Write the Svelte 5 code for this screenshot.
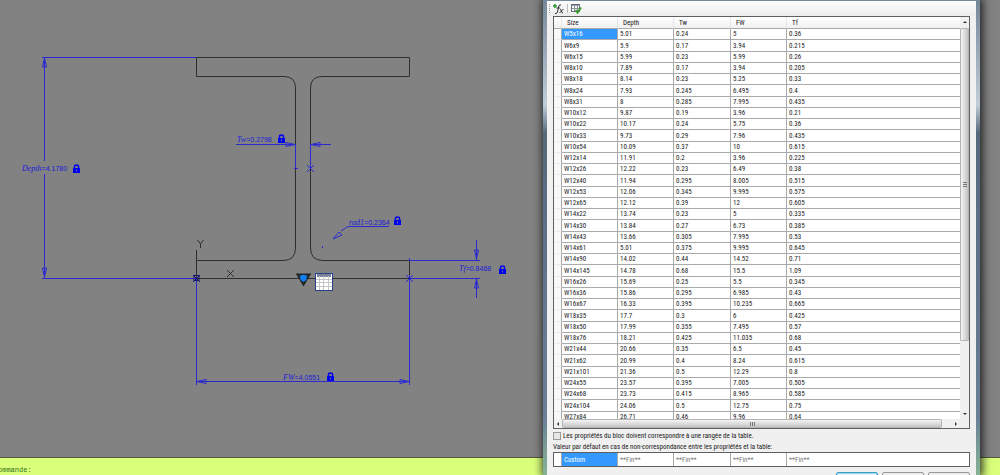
<script lang="ts">
	const columns = ['Size', 'Depth', 'Tw', 'FW', 'Tf'];

	const rows = [
		['W5x16', '5.01', '0.24', '5', '0.36'],
		['W6x9', '5.9', '0.17', '3.94', '0.215'],
		['W6x15', '5.99', '0.23', '5.99', '0.26'],
		['W8x10', '7.89', '0.17', '3.94', '0.205'],
		['W8x18', '8.14', '0.23', '5.25', '0.33'],
		['W8x24', '7.93', '0.245', '6.495', '0.4'],
		['W8x31', '8', '0.285', '7.995', '0.435'],
		['W10x12', '9.87', '0.19', '3.96', '0.21'],
		['W10x22', '10.17', '0.24', '5.75', '0.36'],
		['W10x33', '9.73', '0.29', '7.96', '0.435'],
		['W10x54', '10.09', '0.37', '10', '0.615'],
		['W12x14', '11.91', '0.2', '3.96', '0.225'],
		['W12x26', '12.22', '0.23', '6.49', '0.38'],
		['W12x40', '11.94', '0.295', '8.005', '0.515'],
		['W12x53', '12.06', '0.345', '9.995', '0.575'],
		['W12x65', '12.12', '0.39', '12', '0.605'],
		['W14x22', '13.74', '0.23', '5', '0.335'],
		['W14x30', '13.84', '0.27', '6.73', '0.385'],
		['W14x43', '13.66', '0.305', '7.995', '0.53'],
		['W14x61', '5.01', '0.375', '9.995', '0.645'],
		['W14x90', '14.02', '0.44', '14.52', '0.71'],
		['W14x145', '14.78', '0.68', '15.5', '1.09'],
		['W16x26', '15.69', '0.25', '5.5', '0.345'],
		['W16x36', '15.86', '0.295', '6.985', '0.43'],
		['W16x67', '16.33', '0.395', '10.235', '0.665'],
		['W18x35', '17.7', '0.3', '6', '0.425'],
		['W18x50', '17.99', '0.355', '7.495', '0.57'],
		['W18x76', '18.21', '0.425', '11.035', '0.68'],
		['W21x44', '20.66', '0.35', '6.5', '0.45'],
		['W21x62', '20.99', '0.4', '8.24', '0.615'],
		['W21x101', '21.36', '0.5', '12.29', '0.8'],
		['W24x55', '23.57', '0.395', '7.005', '0.505'],
		['W24x68', '23.73', '0.415', '8.965', '0.585'],
		['W24x104', '24.06', '0.5', '12.75', '0.75'],
		['W27x84', '26.71', '0.46', '9.96', '0.64'],
	];

	const fallback = ['Custom', '**Fin**', '**Fin**', '**Fin**', '**Fin**'];

	// parameter labels on the drawing
	const params = [
		{ name: 'Depth', value: '4.1780', x: 22, y: 171, lockX: 73, lockY: 164 },
		{ name: 'Tw', value: '0.2798', x: 237, y: 142, lockX: 278, lockY: 134 },
		{ name: 'rad1', value: '0.2364', x: 349, y: 225, lockX: 394, lockY: 216 },
		{ name: 'Tf', value: '0.8468', x: 459, y: 271, lockX: 499, lockY: 265 },
		{ name: 'FW', value: '4.0551', x: 283, y: 380, lockX: 327, lockY: 372 },
	];

	let selected = $state(0);
	let mustMatch = $state(false);
</script>

<div class="workspace">
	<main class="canvas">
		<svg class="drawing" width="540" height="400" aria-label="Section">
			<g class="section">
				<path d="M196.500 57.500H409.500V76.500H322Q310.500 76.500 310.500 88V248Q310.500 260.500 323 260.500H409.500V278.500H196.500V260.500H283Q295.500 260.500 295.500 248V88Q295.500 76.500 284 76.500H196.500Z" />
				<path d="M196.500 250V278" />
				<path d="M197.500 240l3 4 3-4M200.500 244v4M227 270l7 7M234 270l-7 7" />
			</g>

			<g class="dim">
				<path d="M42 57.500H196M44.500 58V161M44.500 174V278M42 278.500H196" />
				<path d="M42.500 67l2-9 2 9zM42.500 268l2 9 2-9z" />
				<path d="M236 144.500H296M310.500 144.500H331M295.500 144V168M310.500 144V168M294 168.500h4" />
				<path d="M286 142.500l9 2-9 2zM320 142.500l-9 2 9 2z" />
				<path d="M307 165l7 7M314 165l-7 7" />
				<path d="M389 226.500H348L341 231M333 239l6-7 3 3zM322.500 246v2" />
				<path d="M410 260.500H480M410 278.500H480M476.500 240V260M476.500 279V298" />
				<path d="M474.500 250l2 9 2-9zM474.500 288l2-9 2 9z" />
				<path d="M196.500 279V385M409.500 258V261M409.500 279V385M197 381.500H409" />
				<path d="M206 379.500l-9 2 9 2zM400 379.500l9 2-9 2z" />
				<path d="M406 275l7 7M413 275l-7 7M409.500 275v7" />
			</g>

			<g class="node">
				<rect x="194" y="275.500" width="5" height="5" />
				<path d="M193 275l7 7M200 275l-7 7" />
			</g>

			{#each params as p}
				<text class="param" x={p.x} y={p.y}><tspan class="name">{p.name}</tspan>={p.value}</text>
				<g class="lock" transform="translate({p.lockX} {p.lockY})">
					<path class="shackle" d="M1.500 4V2.500Q1.500 1 3.500 1T5.500 2.500V4" />
					<rect y="4" width="7" height="5" />
					<path class="keyhole" d="M3.500 5.500v2" />
				</g>
			{/each}

			<path class="grip" d="M297.500 274.500h12l-6 10z" />
			<circle class="grip-dot" cx="303.500" cy="278" r="3.200" />
			<g class="table-grip">
				<rect x="315.500" y="273.500" width="17" height="17" />
				<path class="head" d="M317 275.500h14" />
				<path d="M316 279.500h16M316 282.500h16M316 286.500h16M319.500 276v14M323.500 276v14M328.500 276v14" />
			</g>
		</svg>
	</main>

	<footer class="command">ommande:</footer>

	<section class="dialog">
		<div class="toolbar">
			<span class="gripper"></span>
			<button aria-label="Ajouter des propriétés">
				<svg width="11" height="12">
					<path class="plus" d="M0 3h4M2 1v4" />
					<path class="fx" d="M8 2Q6 1 5.500 4L4.500 9Q4 11 2 10.500M3.500 5H7M7 6Q8 6 8.300 8T10 10M10.500 6L6.500 10" />
				</svg>
			</button>
			<span class="divider"></span>
			<button aria-label="Vérifier la table">
				<svg width="11" height="12">
					<rect class="sheet" x="0.500" y="1.500" width="8" height="7" />
					<path class="sheet" d="M1 2.500h8M1 5.500h8M3.500 2v6M6.500 2v6" />
					<path class="tick" d="M4.500 7l2 2.500L10 4.500" />
				</svg>
			</button>
		</div>

		<div class="body">
			<div class="grid-box">
				<div class="viewport">
					<table>
						<colgroup><col class="mark" /><col /><col /><col class="wide" /><col /><col class="rest" /></colgroup>
						<thead>
							<tr>
								<td></td>
								{#each columns as name}<th scope="col">{name}</th>{/each}
							</tr>
						</thead>
						<tbody>
							{#each rows as row, i}
								<tr onclick={() => (selected = i)}>
									<td class="mark"></td>
									{#each row as cell, c}
										<td class:selected={selected === i && c === 0}>{cell}</td>
									{/each}
								</tr>
							{/each}
						</tbody>
					</table>
				</div>
				<div class="vscroll">
					<span class="arrow up"></span>
					<span class="thumb"><i></i></span>
					<span class="arrow down"></span>
				</div>
				<div class="hscroll">
					<span class="arrow left"></span>
					<span class="thumb"><i></i></span>
					<span class="arrow right"></span>
				</div>
			</div>

			<label class="match">
				<input type="checkbox" bind:checked={mustMatch} />
				Les propriétés du bloc doivent correspondre à une rangée de la table.
			</label>

			<p class="caption" id="fallback-caption">Valeur par défaut en cas de non-correspondance entre les propriétés et la table:</p>
			<table class="fallback" aria-labelledby="fallback-caption">
				<colgroup><col class="mark" /><col /><col /><col class="wide" /><col /><col class="rest" /></colgroup>
				<tbody>
					<tr>
						<td></td>
						{#each fallback as cell, c}
							<td class:selected={c === 0}>{cell}</td>
						{/each}
					</tr>
				</tbody>
			</table>

			<div class="actions">
				<button class="default">OK</button>
				<button>Annuler</button>
				<button>Aide</button>
			</div>
		</div>
	</section>
</div>

<style>
	:global(body) { margin: 0; }
	.workspace {
		position: relative; display: flex; flex-direction: column;
		height: 100vh; overflow: hidden; background: #828282;
		font-family: "Roboto Condensed", "Liberation Sans", Arial, sans-serif; font-size: 7px; color: #222;
	}
	.canvas { flex: 1; min-height: 0; overflow: hidden; }
	.drawing { display: block; fill: none; }
	.section { stroke: #2e2e2e; }
	.dim { stroke: #2a2ad0; }
	.node { stroke: #16166a; }
	.param { fill: #1c1cd8; font-family: "Liberation Sans", Arial, sans-serif; font-size: 7px; }
	.name { font-family: "Liberation Serif", serif; font-style: italic; font-size: 8px; }
	.lock rect { fill: #0000f0; }
	.shackle { stroke: #0000f0; stroke-width: 1.5; }
	.keyhole { stroke: #6666a0; }
	.grip { fill: #1d6fd0; stroke: #222; stroke-width: 2; }
	.grip-dot { fill: #1080f0; }
	.table-grip rect { fill: #fff; stroke: #27408a; }
	.table-grip path { stroke: #c4c4c4; }
	.table-grip .head { stroke: #7c8698; stroke-width: 3; }

	.command {
		height: 13px; padding-top: 4px; border-top: 1px solid #55583f;
		background: #d9ff7b; color: #35701c; text-indent: -2px;
		font: 7px/16px "Liberation Mono", monospace;
	}

	.dialog {
		position: absolute; top: 0; left: 54.300%; right: 2%; bottom: 0; overflow: hidden;
		border: solid #66788c; border-width: 1px 4px 0; background: #f0f0f0;
		border-image: linear-gradient(#75879a, #c0cdd8 22%, #55697d 28%, #6a8098 88%, #86b494) 1;
	}
	.workspace::after {
		content: ""; position: absolute; top: 0; bottom: 0; left: 54.300%; right: 2%;
		pointer-events: none; box-shadow: 1px 0 8px 2px #111c;
	}

	.toolbar {
		display: flex; align-items: center; gap: 3px; height: 15px; padding: 0 2px;
		background: linear-gradient(#fdfdfd, #ececec);
	}
	.gripper { width: 0; height: 9px; border-left: 1px dotted #999; }
	.divider { width: 1px; height: 9px; background: #bbb; }
	.toolbar button { display: flex; padding: 0; border: 0; background: none; }
	.toolbar svg { fill: none; stroke: #333; }
	.toolbar .plus { stroke: #2b9b35; stroke-width: 1.5; }
	.toolbar .sheet { fill: #fff; stroke: #66717d; }
	.toolbar .tick { fill: none; stroke: #3a9b2a; stroke-width: 2; }
	.toolbar path.sheet { fill: none; stroke: #8d969e; }

	.body { padding: 0 6px; }
	.grid-box {
		display: grid; grid-template: 402px 9px / 1fr 9px;
		border: 1px solid #5f5f5f; background: #f0f0f0;
	}
	.viewport { overflow: hidden; background: #fff; }

	table { width: 100%; table-layout: fixed; border-collapse: separate; border-spacing: 0; }
	col { width: 56px; }
	col.mark { width: 8px; }
	col.wide { width: 57px; }
	col.rest { width: auto; }
	th, td {
		box-sizing: border-box; height: 11px; padding: 1px 2px 0; line-height: 9px;
		text-align: left; font-weight: normal; white-space: nowrap; overflow: hidden;
		border-right: 1px solid #aaa; border-bottom: 1px solid #aaa;
	}
	tbody tr:nth-child(4n + 2) td { height: 12px; }
	th:last-child, td:last-child { border-right: 0; }
	thead th, thead td { height: 12px; background: linear-gradient(#fff, #f0f0f0); border-right-color: #e6e6e6; }
	th { padding-left: 5px; }
	td.mark { background: #f8f8f8; border-bottom-color: #ececec; }
	td.selected { background: #3399ff; color: #fff; }

	.vscroll, .hscroll { display: flex; align-items: center; background: #f0f0f0; }
	.vscroll { flex-direction: column; }
	.hscroll { grid-column: 1 / 3; padding-right: 9px; }
	.thumb {
		display: flex; align-items: center; justify-content: center; box-sizing: border-box;
		border: 1px solid #b4b4b4; border-radius: 1px;
	}
	.vscroll .thumb { width: 9px; height: 313px; background: linear-gradient(90deg, #f4f4f4, #c4c4c4); }
	.hscroll .thumb { flex: 1; height: 9px; margin-right: 10px; background: linear-gradient(#f4f4f4, #c4c4c4); }
	.vscroll i { width: 4px; height: 5px; background: repeating-linear-gradient(#777 0 1px, transparent 1px 2px); }
	.hscroll i { width: 5px; height: 4px; background: repeating-linear-gradient(90deg, #777 0 1px, transparent 1px 2px); }
	.arrow { border: 2px solid transparent; margin: 3px; }
	.up { border-top: 0; border-bottom-color: #333; margin: 4px 0 5px; }
	.down { border-bottom: 0; border-top-color: #333; margin: auto 0 4px; }
	.left { border-left: 0; border-right-color: #333; }
	.right { border-right: 0; border-left-color: #333; }

	.match { display: flex; align-items: center; gap: 2px; height: 14px; }
	.match input {
		appearance: none; box-sizing: border-box; width: 8px; height: 8px; margin: 0;
		border: 1px solid #999; background: #e4e6e8;
	}
	.match input:checked { background: #3a6ea5; }
	.caption { margin: 0; line-height: 9px; }
	.fallback { border: 1px solid #5f5f5f; background: #fff; color: #777; }
	.fallback td { height: 13px; border-bottom: 0; }

	.actions { display: flex; justify-content: flex-end; gap: 4px; padding-top: 5px; }
	.actions button {
		box-sizing: border-box; width: 42px; height: 14px; padding: 0;
		border: 1px solid #999; border-radius: 2px; background: #eee;
		font: inherit; line-height: 5px; color: #222;
	}
	.actions .default { border-color: #3c9cc4; box-shadow: inset 0 0 0 1px #9bdcf2; }
</style>
